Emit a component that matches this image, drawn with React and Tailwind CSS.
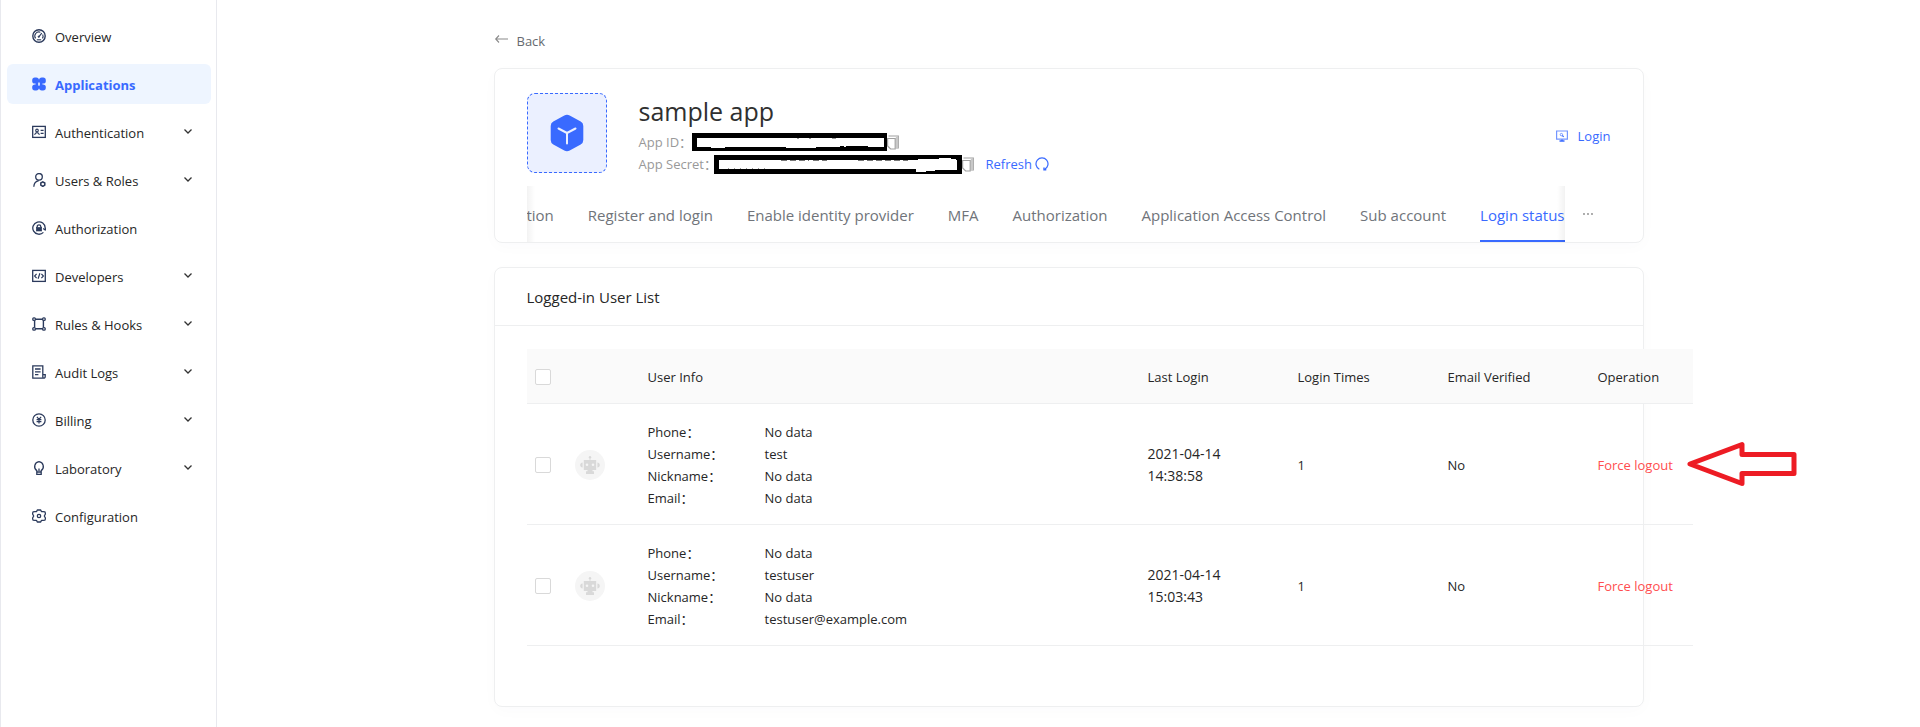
const Svg = ({ children, size = 14, box = "0 0 14 14", className = "" }) => (
  <svg width={size} height={size} viewBox={box} fill="none" stroke="currentColor" strokeWidth="1.3" aria-hidden="true" className={`shrink-0 ${className}`}>
    {children}
  </svg>
);

const icons = {
  overview: (
    <Svg>
      <circle cx="7" cy="7" r="6.2" strokeWidth="1.4" />
      <path d="M3.6 9.4A4.100 4.100 0 0 1 8.400 3.200M10.700 5.500a4.100 4.100 0 0 1-.3 3.900M7 7.600 9.800 4.200" strokeWidth="1.100" />
      <circle cx="6.800" cy="7.700" r="0.700" fill="currentColor" strokeWidth="0.800" />
      <path d="M4.800 10.800h4.400" strokeWidth="1.100" />
    </Svg>
  ),
  apps: (
    <Svg>
      <g fill="currentColor" stroke="none">
        <rect x="0.2" y="0.6" width="6.700" height="6" rx="2.700" />
        <rect x="7.100" y="0.6" width="6.700" height="6" rx="2.700" />
        <rect x="0.2" y="7.400" width="6.700" height="6" rx="2.700" />
        <rect x="7.100" y="7.400" width="6.700" height="6" rx="2.700" />
        <rect x="3.600" y="3" width="2.600" height="8" />
        <rect x="7.800" y="3" width="2.600" height="8" />
        <rect x="4" y="2.600" width="6" height="2.400" />
        <rect x="4" y="9" width="6" height="2.400" />
      </g>
    </Svg>
  ),
  auth: (
    <Svg>
      <rect x="0.7" y="1.4" width="12.6" height="11" />
      <circle cx="5" cy="5.4" r="1.300" strokeWidth="1.1" />
      <path d="M2.6 9.800c.4-1.600 1.200-2.200 2.400-2.200s2 .6 2.400 2.200M8.600 5.400h3M8.600 8.400h3" strokeWidth="1.1" />
    </Svg>
  ),
  users: (
    <Svg>
      <circle cx="7" cy="3.8" r="3.3" />
      <path d="M1.8 13.8c.1-3.4 1.8-5.6 5-6.2" />
      <path d="m10.8 8.8 2 1.200v2.200l-2 1.200-2-1.200V10z" strokeWidth="1.500" />
    </Svg>
  ),
  lock: (
    <Svg>
      <path d="M11.4 11.4A6.2 6.2 0 1 1 13.200 7v1.500" />
      <path d="m11.200 7.400 2 1.600 1-2" />
      <rect x="4.300" y="6.400" width="5.400" height="3.600" fill="currentColor" strokeWidth="0.600" />
      <path d="M5.200 6.400V5.600a1.800 1.800 0 0 1 3.600 0v.8" />
    </Svg>
  ),
  dev: (
    <Svg>
      <rect x="0.7" y="1.4" width="12.6" height="11" />
      <path d="M4.600 4.800 2.600 7l2 2.200M9.400 4.800l2 2.200-2 2.200M7.900 4.200 6.100 9.800" strokeWidth="1.200" />
    </Svg>
  ),
  rules: (
    <Svg>
      <path d="M4 2.200h6M4 11.800h6M2.600 4v6M11.400 4v6" strokeWidth="1.400" />
      <rect x="0.800" y="0.800" width="2.600" height="2.600" rx="1" />
      <rect x="10.600" y="0.800" width="2.600" height="2.600" rx="1" />
      <rect x="0.800" y="10.600" width="2.600" height="2.600" rx="1" />
      <rect x="10.600" y="10.600" width="2.600" height="2.600" rx="1" />
    </Svg>
  ),
  audit: (
    <Svg>
      <path d="M10.800 9V.8H.8v12.400h10.800a1.500 1.500 0 0 0 1.600-1.600V9.600h-2.400v2.200a1.300 1.300 0 0 0 1 1.300" />
      <path d="M3 4h5.600M3 6.800h5.600M3 9.600h3.400" />
    </Svg>
  ),
  billing: (
    <Svg>
      <circle cx="7" cy="7" r="6.200" />
      <path d="m4.900 3.800 2.100 2.600 2.100-2.600M7 6.200v4.400M4.600 6.700h4.800M4.600 8.700h4.800" strokeWidth="1.200" />
    </Svg>
  ),
  lab: (
    <Svg>
      <path d="M4.800 9.600A4.900 4.900 0 0 1 7 .7a4.900 4.900 0 0 1 2.200 8.900v3.700H4.800zM4.800 11h4.400M7 7.600V10" />
    </Svg>
  ),
  config: (
    <Svg>
      <path d="M5.300 1h3.400l.7 1.600 1.700.1 1.900.2.500 2-1.200 2.100 1.200 2.100-.5 2-1.900.2-1.700.1L8.700 13H5.300l-.7-1.600-1.700-.1-1.900-.2-.5-2L1.700 7 .5 4.900l.5-2 1.900-.2 1.700-.1z" strokeLinejoin="round" />
      <circle cx="7" cy="7" r="1.700" />
    </Svg>
  ),
};

const nav = [
  ["overview", "Overview", false],
  ["apps", "Applications", false],
  ["auth", "Authentication", true],
  ["users", "Users & Roles", true],
  ["lock", "Authorization", false],
  ["dev", "Developers", true],
  ["rules", "Rules & Hooks", true],
  ["audit", "Audit Logs", true],
  ["billing", "Billing", true],
  ["lab", "Laboratory", true],
  ["config", "Configuration", false],
];

const tabs = ["Configuration", "Register and login", "Enable identity provider", "MFA", "Authorization", "Application Access Control", "Sub account", "Login status"];

const users = [
  { info: [["Phone", "No data"], ["Username", "test"], ["Nickname", "No data"], ["Email", "No data"]], date: "2021-04-14", time: "14:38:58" },
  { info: [["Phone", "No data"], ["Username", "testuser"], ["Nickname", "No data"], ["Email", "testuser@example.com"]], date: "2021-04-14", time: "15:03:43" },
];

const Sidebar = () => (
  <aside className="w-[217px] shrink-0 border-x border-[#e8e9ee] pt-4 pr-[5px] pl-[6px]">
    <nav className="flex flex-col gap-2">
      {nav.map(([icon, label, open]) => {
        const active = icon === "apps";
        return (
          <a key={label} href={`#${icon}`} aria-current={active ? "page" : undefined} className={`flex h-10 items-center rounded-md pr-[17px] pl-[25px] ${active ? "bg-[#eef5ff] font-bold text-[#396aff]" : "text-[#262626]"}`}>
            <span className={active ? "" : "text-[#2b3a5c]"}>{icons[icon]}</span>
            <span className="ml-[9px] flex-1 pt-[2px]">{label}</span>
            {open && (
              <Svg size={12} box="0 0 12 12" className="text-[#333]">
                <path d="m2.500 3.500 3.500 3.500 3.500-3.500" />
              </Svg>
            )}
          </a>
        );
      })}
    </nav>
  </aside>
);

const CopyIcon = () => (
  <svg width="12" height="15" viewBox="0 0 12 15" fill="none" stroke="#a0a0a0" strokeWidth="1.200" aria-hidden="true">
    <path d="M1.500 1h9.800v12H9" />
    <path d="M10 1.500v11.500" stroke="#c8c8c8" strokeWidth="2.400" />
    <path d="M.6 3.500h7.600V14H3.600l-3-3z" fill="#fff" />
  </svg>
);

const Checkbox = ({ label }) => (
  <input type="checkbox" aria-label={label} className="block size-4 appearance-none rounded-[2px] border border-[#d9d9d9] bg-white checked:bg-[#396aff]" />
);

const Robot = () => (
  <span className="flex size-[30px] items-center justify-center rounded-full bg-[#f5f5f5]">
    <svg width="20" height="18" viewBox="0 0 20 18" fill="#d9d9d9" aria-hidden="true">
      <circle cx="10" cy="1.300" r="1.200" />
      <path d="M9.600 2h.8v2h-.8z" />
      <path fillRule="evenodd" d="M3.800 4h12.400v10H12.500v1.300H14V18H6v-2.700h1.500V14H3.800zM7 7.500a1.300 1.300 0 1 0 0 2.600 1.300 1.300 0 0 0 0-2.600zm6 0a1.300 1.300 0 1 0 0 2.600 1.300 1.300 0 0 0 0-2.600z" />
      <path d="M2.600 6.500v5C1.200 11.300.2 10.500.2 9s1-2.300 2.400-2.500zM17.400 6.500v5c1.400-.2 2.400-1 2.400-2.500s-1-2.300-2.400-2.500z" />
    </svg>
  </span>
);

const card = "rounded-lg border border-[#eeeff0] shadow-[0_4px_16px_rgba(29,53,87,0.02)]";

export default function App() {
  return (
    <div className="flex min-h-screen overflow-x-hidden bg-white font-['Open_Sans','Noto_Sans_CJK_SC',sans-serif] text-[13px] leading-[22px] text-[#262626]">
      <Sidebar />
      <main className="min-w-0 flex-1 px-6 pt-[30px] pb-[20px]">
        <div className="mx-auto max-w-[1150px]">
          <a href="#back" className="flex w-fit items-center gap-[9px] text-[#666a70]">
            <svg width="14" height="10" viewBox="0 0 14 10" fill="none" stroke="#8a8a8a" strokeWidth="1.100" aria-hidden="true" className="-mt-1">
              <path d="M14 5H2M5 1.500 1.700 5 5 8.500" />
            </svg>
            Back
          </a>

          <section className={`mt-4 pt-6 ${card}`}>
            <div className="flex px-8">
              <div className="flex size-20 items-center justify-center rounded-lg border border-dashed border-[#396aff] bg-[#ebf0ff]">
                <svg width="34" height="38" viewBox="0 0 34 38" fill="none" aria-hidden="true">
                  <path d="M14.300 1.600a5.500 5.500 0 0 1 5.400 0l11 6A5 5 0 0 1 33.300 12v14a5 5 0 0 1-2.600 4.400l-11 6a5.500 5.500 0 0 1-5.400 0l-11-6A5 5 0 0 1 .7 26V12a5 5 0 0 1 2.600-4.400z" fill="#396aff" />
                  <path d="M8.500 14.500 17 19l8.500-4.500M17 19v10.500" stroke="#ebf0ff" strokeWidth="2" strokeLinecap="round" />
                </svg>
              </div>
              <div className="ml-8 flex-1">
                <h1 className="pt-[2px] pb-1 text-[25px] leading-8 text-[#303030]">sample app</h1>
                <div className="flex h-[22px] items-center text-[#999]">
                  <span className="w-[53px] whitespace-nowrap">App ID：</span>
                  <svg width="195" height="18" viewBox="0 0 195 18" role="img" aria-label="Hidden app ID">
                    <path d="M0 0h195v18H0z" fill="#000" />
                    <path d="M5 5h187v9h-16v-1h-22v1h-2v-1h-4v1h-24v1H94v-1H33v1H19v-1H5z" fill="#fff" />
                    <path d="M105 5.500h2M117 5.500h2M140 5.500h4" stroke="#999" />
                  </svg>
                  <button type="button" aria-label="Copy app ID"><CopyIcon /></button>
                </div>
                <div className="flex h-[22px] items-center text-[#999]">
                  <span className="w-[75px] whitespace-nowrap">App Secret：</span>
                  <svg width="248" height="19" viewBox="0 0 248 19" role="img" aria-label="Hidden app secret">
                    <path d="M0 0h248v19H0z" fill="#000" />
                    <path d="M5 5h199V4h21V3h12v1h5v1h1v10h-22v1h-9v1h-10v-3H5z" fill="#fff" />
                    <path d="M14 13.500h40" stroke="#999" strokeDasharray="1 5" />
                    <path d="M67 5.500h28M99 5.500h14M144 5.500h50" stroke="#777" strokeDasharray="6 3" />
                  </svg>
                  <button type="button" aria-label="Copy app secret"><CopyIcon /></button>
                  <button type="button" className="ml-3 flex items-center gap-[3px] text-[#396aff]">
                    Refresh
                    <svg width="14" height="14" viewBox="0 0 14 14" fill="none" stroke="currentColor" strokeWidth="1.200" aria-hidden="true">
                      <path d="M4.300 12.300A6 6 0 1 1 9.700 12.300" />
                      <path d="M9 10.500v2.300h2.300" strokeWidth="1.400" />
                    </svg>
                  </button>
                </div>
              </div>
              <button type="button" className="mt-8 flex h-[22px] items-center gap-[10px] text-[#396aff]">
                <svg width="12" height="12" viewBox="0 0 12 12" fill="none" stroke="currentColor" aria-hidden="true">
                  <path d="M.6 1h10.800v8.200H.6z" strokeOpacity="0.700" strokeWidth="1.200" />
                  <path d="M3.500 11h5M6 9.500V11" strokeWidth="1.500" />
                  <circle cx="5.400" cy="4.600" r="1.200" strokeOpacity="0.700" strokeWidth="0.900" />
                  <path d="m6.300 5.500 1.400 1.400" strokeWidth="1.200" />
                </svg>
                Login
              </button>
            </div>

            <div className="mt-[11px] flex h-[56px] pl-8">
              <div role="tablist" className="relative flex min-w-0 flex-1 justify-end gap-[34px] overflow-hidden text-[15px]">
                {tabs.map((t) => {
                  const active = t === "Login status";
                  return (
                    <button key={t} type="button" role="tab" aria-selected={active} className={`shrink-0 border-b-2 pt-[3px] whitespace-nowrap ${active ? "border-[#396aff] text-[#396aff]" : "border-transparent text-[#70747a]"}`}>
                      {t}
                    </button>
                  );
                })}
                <span className="pointer-events-none absolute inset-y-0 left-0 w-2 bg-linear-to-r from-black/5 to-transparent" />
                <span className="pointer-events-none absolute inset-y-0 right-0 w-2 bg-linear-to-l from-black/5 to-transparent" />
              </div>
              <button type="button" aria-label="More tabs" className="w-[78px] pl-[17px] text-left">
                <svg width="12" height="12" viewBox="0 0 12 12" fill="#888" aria-hidden="true">
                  <circle cx="2" cy="6" r="0.900" /><circle cx="6" cy="6" r="0.900" /><circle cx="10" cy="6" r="0.900" />
                </svg>
              </button>
            </div>
          </section>

          <section className={`mt-6 pb-[60px] ${card}`}>
            <h2 className="border-b border-[#eeeff0] px-8 pt-[18px] pb-[17px] text-[15px]">Logged-in User List</h2>
            <div className="px-8 pt-[23px]">
              <table className="w-[1166px] table-fixed border-separate border-spacing-0 text-left">
                <colgroup>
                  <col className="w-8" /><col className="w-[81px]" /><col className="w-[500px]" /><col className="w-[150px]" /><col className="w-[150px]" /><col className="w-[150px]" /><col />
                </colgroup>
                <thead>
                  <tr className="bg-[#fafafa] *:border-b *:border-[#eeeff0] *:px-2 *:pt-[17px] *:pb-[15px] *:font-normal">
                    <th><Checkbox label="Select all users" /></th>
                    <td />
                    <th>User Info</th>
                    <th>Last Login</th>
                    <th>Login Times</th>
                    <th>Email Verified</th>
                    <th>Operation</th>
                  </tr>
                </thead>
                <tbody>
                  {users.map((u, i) => (
                    <tr key={u.time} className="*:border-b *:border-[#eeeff0] *:px-2 *:pt-[17px] *:pb-[15px]">
                      <td><Checkbox label={`Select ${u.info[1][1]}`} /></td>
                      <td><div className="pl-2"><Robot /></div></td>
                      <td>
                        <dl>
                          {u.info.map(([k, v]) => (
                            <div key={k} className="flex">
                              <dt className="w-[117px]">{k}：</dt>
                              <dd>{v}</dd>
                            </div>
                          ))}
                        </dl>
                      </td>
                      <td className="text-sm/[22px]">{u.date}<br />{u.time}</td>
                      <td>1</td>
                      <td>No</td>
                      <td className="relative">
                        <button type="button" className="whitespace-nowrap text-[#ff4d4f]">Force logout</button>
                        {i === 0 && (
                          <svg width="110" height="46" viewBox="0 0 110 46" className="absolute top-[37px] left-[97px]" aria-hidden="true">
                            <path d="M3 23 55 3.500V13.500h52v19H55V42.500z" fill="#fff" stroke="#ed1c24" strokeWidth="5" strokeLinejoin="round" />
                          </svg>
                        )}
                      </td>
                    </tr>
                  ))}
                </tbody>
              </table>
            </div>
          </section>
        </div>
      </main>
    </div>
  );
}
